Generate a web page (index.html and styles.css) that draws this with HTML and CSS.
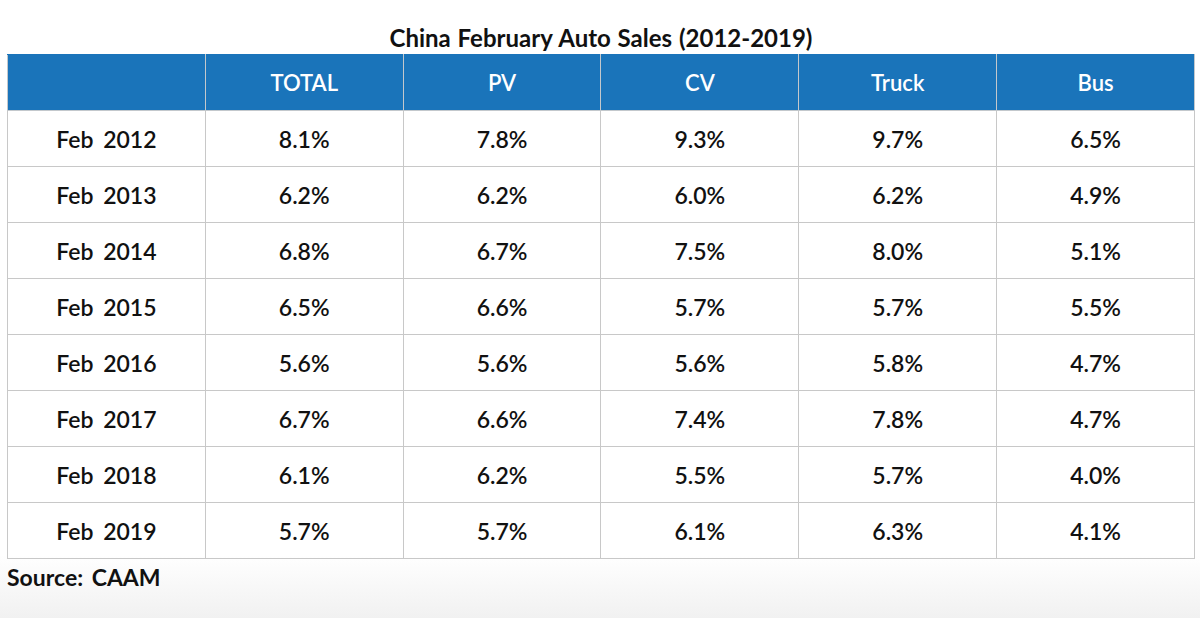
FILE: index.html
```html
<!DOCTYPE html>
<html>
<head>
<meta charset="utf-8">
<link rel="stylesheet" href="styles.css">
</head>
<body>
<div class="page">
  <h1 class="title">China February Auto Sales (2012-2019)</h1>
  <table class="sales">
    <thead>
      <tr><th></th><th>TOTAL</th><th>PV</th><th>CV</th><th>Truck</th><th>Bus</th></tr>
    </thead>
    <tbody>
      <tr><td>Feb 2012</td><td>8.1%</td><td>7.8%</td><td>9.3%</td><td>9.7%</td><td>6.5%</td></tr>
      <tr><td>Feb 2013</td><td>6.2%</td><td>6.2%</td><td>6.0%</td><td>6.2%</td><td>4.9%</td></tr>
      <tr><td>Feb 2014</td><td>6.8%</td><td>6.7%</td><td>7.5%</td><td>8.0%</td><td>5.1%</td></tr>
      <tr><td>Feb 2015</td><td>6.5%</td><td>6.6%</td><td>5.7%</td><td>5.7%</td><td>5.5%</td></tr>
      <tr><td>Feb 2016</td><td>5.6%</td><td>5.6%</td><td>5.6%</td><td>5.8%</td><td>4.7%</td></tr>
      <tr><td>Feb 2017</td><td>6.7%</td><td>6.6%</td><td>7.4%</td><td>7.8%</td><td>4.7%</td></tr>
      <tr><td>Feb 2018</td><td>6.1%</td><td>6.2%</td><td>5.5%</td><td>5.7%</td><td>4.0%</td></tr>
      <tr><td>Feb 2019</td><td>5.7%</td><td>5.7%</td><td>6.1%</td><td>6.3%</td><td>4.1%</td></tr>
    </tbody>
  </table>
  <p class="source">Source: CAAM</p>
</div>
</body>
</html>
```

FILE: styles.css
```css
html, body {
  margin: 0;
  padding: 0;
  height: 618px;
  overflow: hidden;
}
body {
  background: linear-gradient(to bottom, #ffffff 0, #ffffff 555px, #f1f1f1 618px);
  font-family: Lato, "Liberation Sans", sans-serif;
  color: #111;
}
.page {
  padding: 0 5px 0 7px;
}
.title {
  margin: 0;
  height: 54px;
  box-sizing: border-box;
  padding-top: 25px;
  text-align: center;
  font-size: 24px;
  line-height: 26px;
  font-weight: 700;
  color: #111;
  word-spacing: 1px;
}
.sales {
  width: 1188px;
  border-collapse: collapse;
  table-layout: fixed;
}
.sales th {
  height: 55px;
  padding: 0;
  background: #1a74ba;
  color: #fff;
  font-size: 22px;
  font-weight: 600;
  text-align: center;
  border: 1px solid #c3c8cc;
  border-top-color: #1a74ba;
}
.sales td {
  height: 55px;
  padding: 0;
  text-align: center;
  font-size: 23px;
  font-weight: 600;
  word-spacing: 4px;
  border: 1px solid #c8c8c8;
}
.source {
  margin: 4px 0 0;
  font-size: 23px;
  font-weight: 700;
  line-height: 28px;
  word-spacing: 3px;
}
```
